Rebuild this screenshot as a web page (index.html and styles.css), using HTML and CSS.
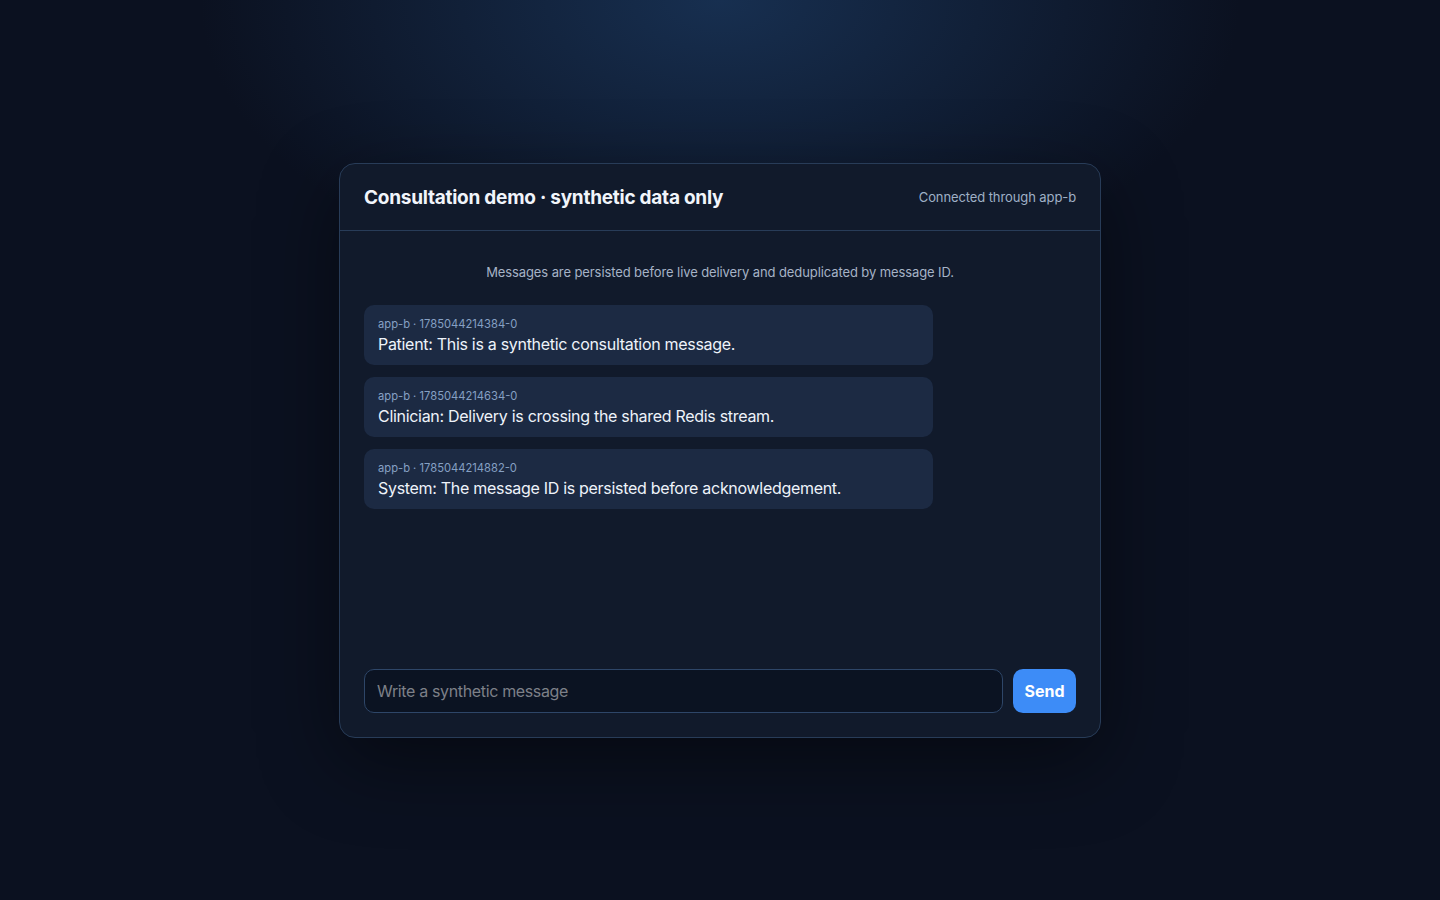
FILE: index.html
```html
<!DOCTYPE html>
<html lang="en">
<head>
<meta charset="utf-8">
<title>Consultation demo</title>
<link rel="stylesheet" href="styles.css">
</head>
<body>
<main class="card">
  <header class="card-header">
    <h1 class="title">Consultation demo · synthetic data only</h1>
    <span class="status">Connected through app-b</span>
  </header>
  <section class="card-body">
    <p class="notice">Messages are persisted before live delivery and deduplicated by message ID.</p>
    <ul class="messages">
      <li class="message">
        <div class="meta">app-b · 1785044214384-0</div>
        <div class="text">Patient: This is a synthetic consultation message.</div>
      </li>
      <li class="message">
        <div class="meta">app-b · 1785044214634-0</div>
        <div class="text">Clinician: Delivery is crossing the shared Redis stream.</div>
      </li>
      <li class="message">
        <div class="meta">app-b · 1785044214882-0</div>
        <div class="text">System: The message ID is persisted before acknowledgement.</div>
      </li>
    </ul>
    <form class="composer" onsubmit="return false">
      <input class="composer-input" type="text" placeholder="Write a synthetic message">
      <button class="send" type="submit">Send</button>
    </form>
  </section>
</main>
</body>
</html>
```

FILE: styles.css
```css
* { box-sizing: border-box; }
html, body { height: 100%; }
body {
  margin: 0;
  font-family: Inter, "Noto Sans", "Liberation Sans", sans-serif;
  color: #e8eef7;
  background-color: #0b1120;
  background-image: radial-gradient(ellipse 520px 300px at 50% 0%, #172f50 0%, rgba(23,47,80,0.55) 45%, rgba(11,17,32,0) 100%);
  background-repeat: no-repeat;
  display: flex;
  align-items: center;
  justify-content: center;
}
.card {
  width: 762px;
  height: 575px;
  background: #111a2b;
  border: 1px solid #283c58;
  border-radius: 16px;
  box-shadow: 0 24px 80px rgba(0, 0, 0, 0.45);
  display: flex;
  flex-direction: column;
  overflow: hidden;
  margin-top: 1px;
}
.card-header {
  height: 67px;
  padding: 0 24px;
  border-bottom: 1px solid #283c58;
  display: flex;
  align-items: center;
  justify-content: space-between;
}
.title {
  margin: 0;
  font-size: 19px;
  font-weight: 700;
  letter-spacing: -0.25px;
  color: #f1f5fb;
}
.status {
  font-size: 13px;
  letter-spacing: -0.1px;
  color: #9fb0c6;
}
.card-body {
  flex: 1;
  display: flex;
  flex-direction: column;
  padding: 32px 24px 24px;
}
.notice {
  margin: 0 0 24px;
  text-align: center;
  font-size: 13px;
  line-height: 18px;
  letter-spacing: -0.1px;
  color: #a6b3c6;
}
.messages {
  list-style: none;
  margin: 0;
  padding: 0;
  flex: 1;
  display: flex;
  flex-direction: column;
  gap: 12px;
}
.message {
  width: calc(80% - 1px);
  background: #1c2a43;
  border-radius: 10px;
  padding: 11px 14px 10px;
}
.meta {
  font-size: 11.2px;
  line-height: 16px;
  color: #86a0c4;
  margin-bottom: 1px;
}
.text {
  font-size: 16px;
  line-height: 22px;
  letter-spacing: -0.3px;
  color: #eef3fa;
}
.composer {
  display: flex;
  gap: 10px;
  margin: 0;
}
.composer-input {
  flex: 1;
  height: 44px;
  padding: 0 12px;
  background: #0b1322;
  border: 1px solid #2e4668;
  border-radius: 10px;
  color: #e8eef7;
  font-family: inherit;
  font-size: 16px;
  letter-spacing: -0.35px;
  outline: none;
}
.composer-input::placeholder { color: #7d8088; }
.send {
  height: 44px;
  width: 63px;
  border: 0;
  border-radius: 10px;
  background: #3d8cf7;
  color: #ffffff;
  font-family: inherit;
  font-size: 16px;
  font-weight: 700;
  cursor: pointer;
}
```
